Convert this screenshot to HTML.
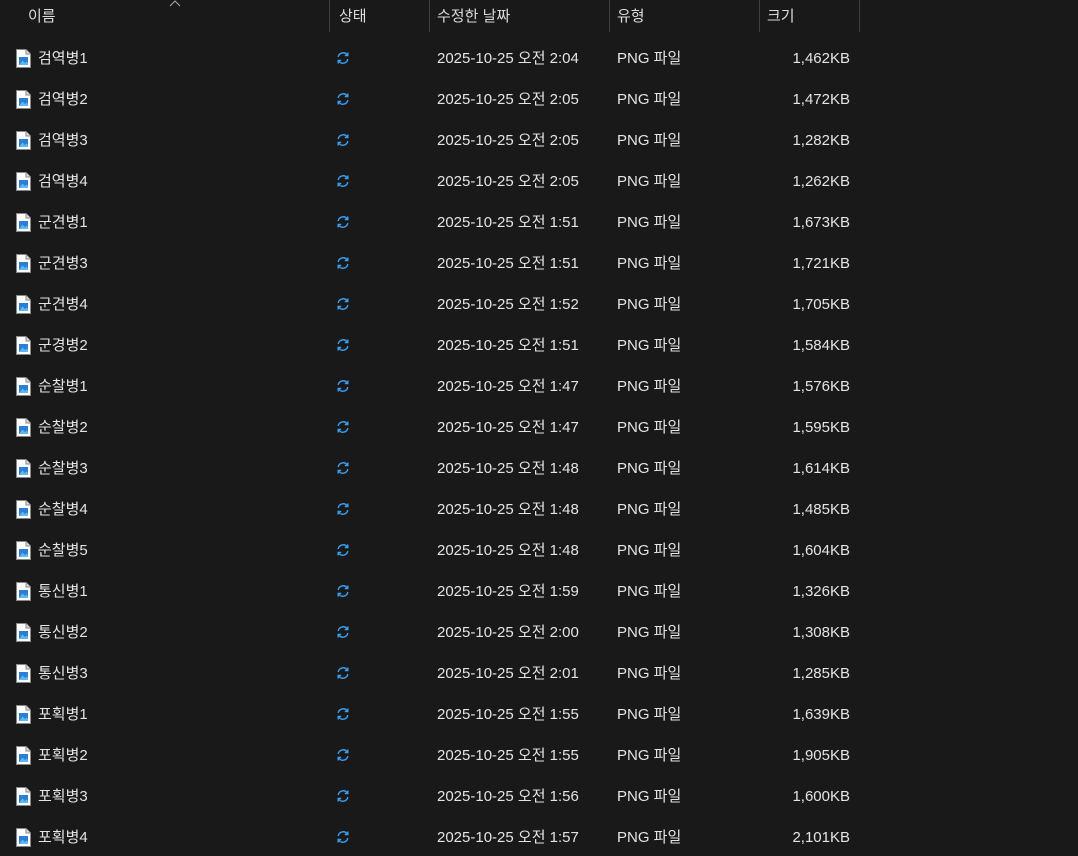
<!DOCTYPE html>
<html><head><meta charset="utf-8"><style>
body{margin:0;background:#191919;width:1078px;height:856px;overflow:hidden;font-family:"Liberation Sans","Noto Sans CJK KR",sans-serif;font-size:15px;color:#e4e4e4;position:relative}
.h{position:absolute;top:5px;color:#dcdcdc}
.sep{position:absolute;top:0;height:32px;width:1px;background:#3f3f3f}
.r{position:absolute;left:0;width:1078px;height:24px;line-height:24px}
.r span{position:absolute;top:0}
.ic{position:absolute;left:15px;top:2px}
.sy{position:absolute;left:336px;top:4px}
.sz{right:228px;text-align:right}
</style></head><body>
<div class="h" style="left:28px">이름</div>
<svg style="position:absolute;left:169px;top:0" width="12" height="7"><path d="M1 6 L6 1 L11 6" fill="none" stroke="#aaa" stroke-width="1"/></svg>
<div class="sep" style="left:329px"></div>
<div class="h" style="left:339px">상태</div>
<div class="sep" style="left:429px"></div>
<div class="h" style="left:437px">수정한 날짜</div>
<div class="sep" style="left:609px"></div>
<div class="h" style="left:617px">유형</div>
<div class="sep" style="left:759px"></div>
<div class="h" style="left:767px">크기</div>
<div class="sep" style="left:859px"></div>
<div id="rows"></div>
<script>
var d=[["검역병1","2:04","1,462KB"],["검역병2","2:05","1,472KB"],["검역병3","2:05","1,282KB"],["검역병4","2:05","1,262KB"],["군견병1","1:51","1,673KB"],["군견병3","1:51","1,721KB"],["군견병4","1:52","1,705KB"],["군경병2","1:51","1,584KB"],["순찰병1","1:47","1,576KB"],["순찰병2","1:47","1,595KB"],["순찰병3","1:48","1,614KB"],["순찰병4","1:48","1,485KB"],["순찰병5","1:48","1,604KB"],["통신병1","1:59","1,326KB"],["통신병2","2:00","1,308KB"],["통신병3","2:01","1,285KB"],["포획병1","1:55","1,639KB"],["포획병2","1:55","1,905KB"],["포획병3","1:56","1,600KB"],["포획병4","1:57","2,101KB"]];
var h="";
d.forEach(function(x,i){var t=47+i*41;
h+='<div class="r" style="top:'+t+'px"><svg class="ic" width="17" height="19" viewBox="0 0 17 19"><path d="M1.5 0.5H11L15.5 5V18.5H1.5Z" fill="#fff" stroke="#888"/><path d="M11 0.5V5H15.5" fill="#ddd" stroke="#888"/><rect x="4" y="8" width="9" height="8" fill="#2a7fd4"/><path d="M4 16L7.5 11.5L10 14L11.5 12.5L13 14V16Z" fill="#5fb7f0"/></svg>'+
'<svg class="sy" width="14" height="14" viewBox="0 0 14 14"><path d="M2.2 6A5 5 0 0 1 11.3 4" fill="none" stroke="#3a9ef0" stroke-width="1.4"/><path d="M11.8 1.5V4.5H8.8" fill="none" stroke="#3a9ef0" stroke-width="1.4"/><path d="M11.8 8A5 5 0 0 1 2.7 10" fill="none" stroke="#3a9ef0" stroke-width="1.4"/><path d="M2.2 12.5V9.5H5.2" fill="none" stroke="#3a9ef0" stroke-width="1.4"/></svg>'+
'<span style="left:38px">'+x[0]+'</span><span style="left:437px">2025-10-25 오전 '+x[1]+'</span><span style="left:617px">PNG 파일</span><span class="sz">'+x[2]+'</span></div>';});
document.getElementById("rows").innerHTML=h;
</script>
</body></html>
